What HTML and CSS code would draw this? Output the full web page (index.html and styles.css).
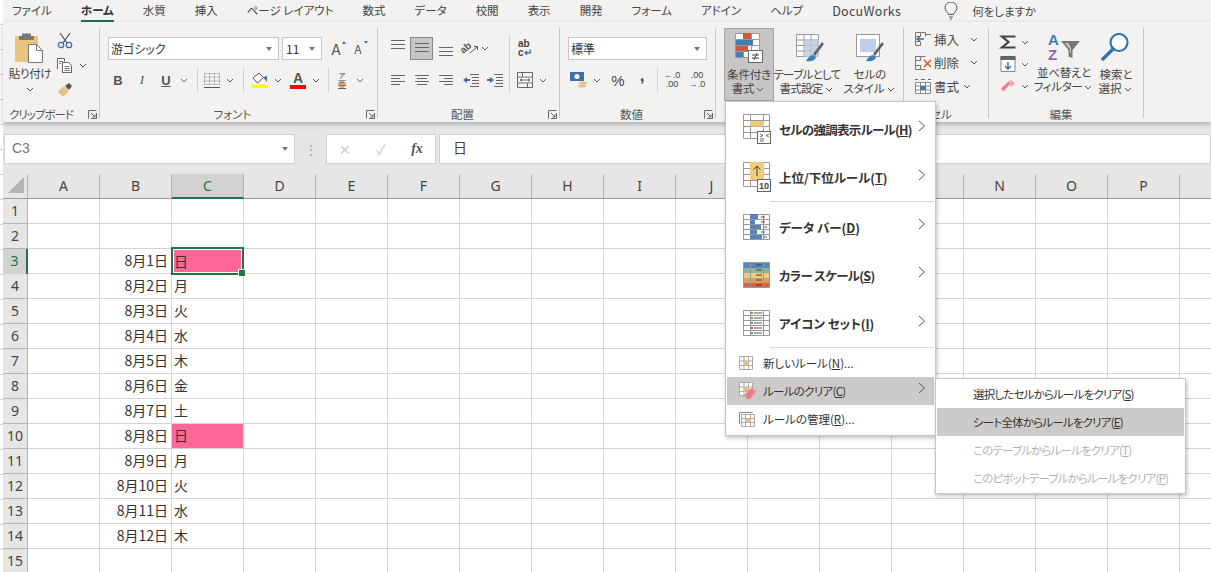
FILE: index.html

```html
<!DOCTYPE html>
<html lang="ja">
<head>
    <meta charset="UTF-8">
    <title>Excel - 条件付き書式</title>
    <link rel="stylesheet" href="styles.css">
</head>
<body>
    <svg class="defs" width="0" height="0">
        <symbol id="chev" viewBox="0 0 8 5"><path d="M1 1l3 3 3-3" fill="none" stroke="#555" stroke-width="1"/></symbol>
        <symbol id="launch" viewBox="0 0 9 9"><path d="M.5 8.500V.5h8M8.500 3v5.500H3M3 3l4 4M7 4.500V7H4.500" fill="none" stroke="#666"/></symbol>
        <symbol id="right" viewBox="0 0 8 12"><path d="M1 1l5.500 5L1 11" fill="none" stroke="#555" stroke-width="1"/></symbol>
        <symbol id="lines" viewBox="0 0 16 12"><path d="M1 1.500h14M1 5.500h14M1 9.500h14" stroke="#666"/></symbol>
    </svg>

    <!-- タブ -->
    <nav class="tabs">
        <span class="tab tab-file">ファイル</span>
        <span class="tab active">ホーム</span>
        <span class="tab">水質</span>
        <span class="tab">挿入</span>
        <span class="tab">ページ レイアウト</span>
        <span class="tab">数式</span>
        <span class="tab">データ</span>
        <span class="tab">校閲</span>
        <span class="tab">表示</span>
        <span class="tab">開発</span>
        <span class="tab">フォーム</span>
        <span class="tab">アドイン</span>
        <span class="tab">ヘルプ</span>
        <span class="tab tab-docu">DocuWorks</span>
        <span class="tell">
            <svg width="14" height="18" viewBox="0 0 14 18"><path d="M4.500 12.500C4 10 1 9 1 6a6 6 0 0 1 12 0c0 3-3 4-3.500 6.500zM5 15h4M6 17h2" fill="none" stroke="#555"/></svg>
            何をしますか
        </span>
    </nav>

    <!-- リボン -->
    <section class="ribbon">
        <div class="group group-clip">
            <div class="group-body">
                <div class="paste">
                    <svg width="30" height="31" viewBox="0 0 30 31">
                        <rect x="0" y="4" width="23" height="26" fill="#ebc47f"/>
                        <path d="M7 4V1.500h9V4h3v4H4V4z" fill="#777"/>
                        <path d="M13.500 12.500h8l6 6v12h-14z" fill="#fff" stroke="#777"/>
                        <path d="M21.500 12.500v6h6" fill="none" stroke="#777"/>
                    </svg>
                    <span class="paste-text">貼り付け</span>
                    <svg class="chev"><use href="#chev"/></svg>
                </div>
                <div class="clip-tools">
                    <svg width="16" height="17" viewBox="0 0 16 17">
                        <path d="M3 1l7 10M13 1L6 11" stroke="#555" stroke-width="1.300"/>
                        <circle cx="4" cy="13" r="2.700" fill="none" stroke="#3f6fa5" stroke-width="1.300"/>
                        <circle cx="12" cy="13" r="2.700" fill="none" stroke="#3f6fa5" stroke-width="1.300"/>
                    </svg>
                    <span class="copy-row">
                        <svg width="16" height="15" viewBox="0 0 16 15">
                            <path d="M.5 11V.5h7v3M5.500 4.500h6l3 3v7h-9z" fill="#fff" stroke="#666"/>
                            <path d="M7.500 8.500h5M7.500 10.500h5M7.500 12.500h5M2 3.500h4M2 5.500h2" stroke="#777"/>
                        </svg>
                        <svg class="chev"><use href="#chev"/></svg>
                    </span>
                    <svg class="brush" width="16" height="15" viewBox="0 0 16 15">
                        <path d="M1 9l6-5 5 5-5 5C5 14 2 12 1 9z" fill="#e5c184"/>
                        <path d="M8 4l4-3 3 3-3 4z" fill="#555"/>
                    </svg>
                </div>
            </div>
            <div class="group-foot"><span></span><span class="foot-clip">クリップボード</span><svg class="launch"><use href="#launch"/></svg></div>
        </div>

        <div class="group group-font">
            <div class="group-body column">
                <div class="tool-row row-top">
                    <div class="combo combo-font">游ゴシック<i class="caret"></i></div>
                    <div class="combo combo-size">11<i class="caret"></i></div>
                    <span class="grow">A<i class="grow-up"></i></span>
                    <span class="grow small">A<i class="grow-down"></i></span>
                </div>
                <div class="tool-row font-tools">
                    <span class="tool txt"><b>B</b></span>
                    <span class="tool txt italic">I</span>
                    <span class="tool txt under"><b>U</b></span>
                    <svg class="chev"><use href="#chev"/></svg>
                    <i class="sep m7"></i>
                    <span class="tool m2">
                        <svg width="16" height="15" viewBox="0 0 16 15"><path d="M.5.5h15v11H.5zM5.500.5v11M10.500.5v11M.5 4h15M.5 8h15" fill="none" stroke="#888" stroke-dasharray="1 1"/><path d="M0 14.500h16" stroke="#555"/></svg>
                    </span>
                    <svg class="chev"><use href="#chev"/></svg>
                    <i class="sep m7"></i>
                    <span class="tool m4">
                        <svg width="16" height="16" viewBox="0 0 16 16"><path d="M7 1L1 6l4.500 5 6-5.500z" fill="#fff" stroke="#555"/><path d="M11 5l4-1v6z" fill="#3f6fa5"/><rect y="12.500" width="16" height="3.500" fill="#ffff00"/></svg>
                    </span>
                    <svg class="chev"><use href="#chev"/></svg>
                    <span class="tool m2 font-color"><b>A</b><i></i></span>
                    <svg class="chev"><use href="#chev"/></svg>
                    <i class="sep m6"></i>
                    <span class="tool m1 ruby"><small>ア</small>亜</span>
                    <svg class="chev"><use href="#chev"/></svg>
                </div>
            </div>
            <div class="group-foot"><span></span><span>フォント</span><svg class="launch"><use href="#launch"/></svg></div>
        </div>

        <div class="group group-align">
            <div class="group-body">
                <div class="column">
                    <div class="tool-row row-top">
                        <span class="tool"><svg class="line-top" width="16" height="12"><use href="#lines" width="16" height="12"/></svg></span>
                        <span class="tool pressed"><svg width="16" height="12"><use href="#lines" width="16" height="12"/></svg></span>
                        <span class="tool"><svg class="line-bottom" width="16" height="12"><use href="#lines" width="16" height="12"/></svg></span>
                        <span class="tool">
                            <svg class="tilt-icon" width="18" height="16" viewBox="0 0 18 16"><text x="0" y="12" class="tilt" transform="rotate(-40 4 10)">ab</text><path d="M9 13l7-6M13 6.500h3.500V10" fill="none" stroke="#555"/></svg>
                        </span>
                        <svg class="chev pull"><use href="#chev"/></svg>
                    </div>
                    <div class="tool-row">
                        <span class="tool"><svg width="16" height="12" viewBox="0 0 16 12"><path d="M1 1.500h14M1 4.500h9M1 7.500h14M1 10.500h9" stroke="#666"/></svg></span>
                        <span class="tool"><svg width="16" height="12" viewBox="0 0 16 12"><path d="M1 1.500h14M3 4.500h10M1 7.500h14M3 10.500h10" stroke="#666"/></svg></span>
                        <span class="tool"><svg width="16" height="12" viewBox="0 0 16 12"><path d="M1 1.500h14M6 4.500h9M1 7.500h14M6 10.500h9" stroke="#666"/></svg></span>
                        <span class="tool"><svg width="17" height="14" viewBox="0 0 17 14"><path d="M1 7l4-3v2h3v2H5v2z" fill="#3f6fa5"/><path d="M8 1.500h9M10 4.500h7M10 7.500h7M10 10.500h7M8 13.500h9" stroke="#666"/></svg></span>
                        <span class="tool"><svg width="17" height="14" viewBox="0 0 17 14"><path d="M8 7L4 4v2H1v2h3v2z" fill="#3f6fa5"/><path d="M8 1.500h9M10 4.500h7M10 7.500h7M10 10.500h7M8 13.500h9" stroke="#666"/></svg></span>
                    </div>
                </div>
                <i class="sep sep-tall"></i>
                <div class="column">
                    <div class="tool-row row-top">
                        <span class="tool wrap-text">ab<br>c<em>↵</em></span>
                    </div>
                    <div class="tool-row">
                        <span class="tool"><svg width="16" height="16" viewBox="0 0 16 16"><path d="M.5.5h15v15H.5zM.5 5h15M.5 11h15M5.500.5V5M10.500 11v4.500" fill="#fff" stroke="#666"/><path d="M3 8h10M5 6.500L3 8l2 1.500M11 6.500L13 8l-2 1.500" fill="none" stroke="#3f6fa5"/></svg></span>
                        <svg class="chev"><use href="#chev"/></svg>
                    </div>
                </div>
            </div>
            <div class="group-foot"><span></span><span>配置</span><svg class="launch"><use href="#launch"/></svg></div>
        </div>

        <div class="group group-number">
            <div class="group-body column">
                <div class="tool-row row-top">
                    <div class="combo combo-format">標準<i class="caret"></i></div>
                </div>
                <div class="tool-row">
                    <span class="tool">
                        <svg width="18" height="16" viewBox="0 0 18 16"><rect width="14" height="9" fill="#3f6fa5"/><circle cx="7" cy="4.500" r="2.500" fill="#fff"/><ellipse cx="13" cy="11" rx="4" ry="1.500" fill="#e5c184"/><ellipse cx="12" cy="14" rx="4" ry="1.500" fill="#e5c184"/></svg>
                    </span>
                    <svg class="chev"><use href="#chev"/></svg>
                    <span class="tool m3 percent">%</span>
                    <span class="tool comma">,</span>
                    <i class="sep m3"></i>
                    <span class="tool m2 decimals"><span><em>←</em>.0</span><span>.00</span></span>
                    <span class="tool m1 decimals"><span>.00</span><span><em>→</em>.0</span></span>
                </div>
            </div>
            <div class="group-foot"><span></span><span>数値</span><svg class="launch"><use href="#launch"/></svg></div>
        </div>

        <div class="group group-style">
            <div class="group-body">
                <div class="big-btn cond open">
                    <svg width="28" height="30" viewBox="0 0 28 30">
                        <path d="M.5.5h24v24H.5zM8.500.5v24M16.500.5v24M.5 6.500h24M.5 12.500h24M.5 18.500h24" fill="#fff" stroke="#999"/>
                        <rect x="8" width="8" height="6" fill="#d0583a"/>
                        <rect x="1" y="7" width="17" height="5" fill="#3f7cb8"/>
                        <rect x="1" y="13" width="12" height="5" fill="#d0583a"/>
                        <rect x="1" y="19" width="7" height="5" fill="#3f7cb8"/>
                        <rect x="13.500" y="17.500" width="14" height="12" fill="#fff" stroke="#666"/>
                        <path d="M17 22h7M17 25h7M22 20l-3 7" stroke="#444" fill="none"/>
                    </svg>
                    <span>条件付き<br>書式<svg class="chev"><use href="#chev"/></svg></span>
                </div>
                <div class="big-btn table-btn">
                    <svg width="30" height="30" viewBox="0 0 30 30">
                        <path d="M1.500 1.500h22v22h-22zM1.500 7h22M1.500 12.500h22M1.500 18h22M9 1.500v22M16 1.500v22" fill="#fff" stroke="#999"/>
                        <rect x="9" y="7" width="15" height="17" fill="#b9c9dd" opacity=".8"/>
                        <path d="M18 21l9-12 2 2-9 12z" fill="#666"/>
                        <path d="M18 22c-3 0-5 3-7 6 4 1 9 0 10-4z" fill="#3f7cb8"/>
                    </svg>
                    <span>テーブルとして<br>書式設定<svg class="chev"><use href="#chev"/></svg></span>
                </div>
                <div class="big-btn cell-btn">
                    <svg width="30" height="30" viewBox="0 0 30 30">
                        <rect x="1.500" y="1.500" width="23" height="22" fill="#fff" stroke="#999"/>
                        <rect x="5" y="6" width="16" height="13" fill="#bdd0e6"/>
                        <path d="M18 21l9-12 2 2-9 12z" fill="#666"/>
                        <path d="M18 22c-3 0-5 3-7 6 4 1 9 0 10-4z" fill="#3f7cb8"/>
                    </svg>
                    <span>セルの<br>スタイル<svg class="chev"><use href="#chev"/></svg></span>
                </div>
            </div>
            <div class="group-foot"></div>
        </div>

        <div class="group group-cells">
            <div class="group-body column cell-list">
                <div class="cell-item">
                    <svg width="18" height="16" viewBox="0 0 18 16"><path d="M1.500 1.500h5v4h-5zM1.500 10.500h5v4h-5zM6.500 1.500h5v4M1.500 5.500v5M12 3.500h5" fill="none" stroke="#777"/><path d="M3 8h7M6 5.500L3 8l3 2.500" fill="none" stroke="#3f6fa5" stroke-width="1.300"/></svg>
                    <span>挿入</span><svg class="chev wide"><use href="#chev"/></svg>
                </div>
                <div class="cell-item">
                    <svg width="18" height="16" viewBox="0 0 18 16"><path d="M1.500 1.500h5v4h-5zM1.500 10.500h5v4h-5zM6.500 1.500h5M1.500 5.500v5M6.500 14.500h5" fill="none" stroke="#777"/><path d="M10 5l7 7M17 5l-7 7" stroke="#d0583a" stroke-width="1.500"/></svg>
                    <span>削除</span><svg class="chev wide"><use href="#chev"/></svg>
                </div>
                <div class="cell-item">
                    <svg width="18" height="16" viewBox="0 0 18 16"><path d="M1.500 4.500h15v11h-15zM1.500 8h15M1.500 12h15M6.500 4.500v11M11.500 4.500v11" fill="#fff" stroke="#888"/><rect x="6" y="8" width="6" height="4" fill="#3f7cb8"/><path d="M1 1.500h3M7 1.500h4M14 1.500h3" stroke="#3f6fa5"/></svg>
                    <span>書式</span><svg class="chev"><use href="#chev"/></svg>
                </div>
            </div>
            <div class="group-foot"><span></span><span>セル</span><span></span></div>
        </div>

        <div class="group group-edit">
            <div class="group-body">
                <div class="column edit-list">
                    <div class="edit-item">
                        <svg width="16" height="14" viewBox="0 0 16 14"><path d="M15.500 1.500H2L8.500 7 2 12.500h13.500" fill="none" stroke="#444" stroke-width="2.200"/></svg>
                        <svg class="chev"><use href="#chev"/></svg>
                    </div>
                    <div class="edit-item">
                        <svg width="15" height="16" viewBox="0 0 15 16"><path d="M.5.500h14v15H.5z" fill="#fff" stroke="#888"/><rect width="15" height="4" fill="#666"/><path d="M7.500 6v7M4.500 10l3 3 3-3" fill="none" stroke="#3f7cb8" stroke-width="1.600"/></svg>
                        <svg class="chev"><use href="#chev"/></svg>
                    </div>
                    <div class="edit-item">
                        <svg width="16" height="14" viewBox="0 0 16 14"><path d="M1 9.500L9 2l2 2-7 8H3z" fill="#e9808f"/><path d="M9 2l2-1 4 3-1 2-3 2-2-3z" fill="#f0a9b4"/></svg>
                        <svg class="chev"><use href="#chev"/></svg>
                    </div>
                </div>
                <div class="big-btn sort-btn">
                    <svg class="sort-icon" width="34" height="28" viewBox="0 0 34 28">
                        <text x="1" y="12" class="sort-a">A</text>
                        <text x="1" y="27" class="sort-z">Z</text>
                        <path d="M14 8h19l-7.500 9v8l-4-1.500V17z" fill="#777"/>
                        <path d="M18 10h3l3 5v5h-1v-4z" fill="#ccc"/>
                    </svg>
                    <span>並べ替えと<br>フィルター<svg class="chev"><use href="#chev"/></svg></span>
                </div>
                <div class="big-btn find-btn">
                    <svg width="30" height="30" viewBox="0 0 30 30">
                        <circle cx="18" cy="9.500" r="8.500" fill="#fff" stroke="#2f75b5" stroke-width="2.200"/>
                        <path d="M12 16L2 26" stroke="#2f75b5" stroke-width="3.500" stroke-linecap="round"/>
                    </svg>
                    <span>検索と<br>選択<svg class="chev"><use href="#chev"/></svg></span>
                </div>
            </div>
            <div class="group-foot"><span></span><span>編集</span><span></span></div>
        </div>
    </section>

    <!-- 数式バー -->
    <section class="formula-bar">
        <div class="name-box">C3<i class="caret"></i></div>
        <span class="grip">⋮</span>
        <div class="fx-box">
            <span class="fx-btn off">✕</span>
            <span class="fx-btn off">✓</span>
            <span class="fx-btn fx">fx</span>
        </div>
        <div class="formula-input">日</div>
    </section>

    <!-- シート -->
    <section class="sheet">
        <div class="col-heads">
            <div class="corner"><i></i></div>
            <div class="col-head">A</div>
            <div class="col-head">B</div>
            <div class="col-head current">C</div>
            <div class="col-head">D</div>
            <div class="col-head">E</div>
            <div class="col-head">F</div>
            <div class="col-head">G</div>
            <div class="col-head">H</div>
            <div class="col-head">I</div>
            <div class="col-head">J</div>
            <div class="col-head">K</div>
            <div class="col-head">L</div>
            <div class="col-head">M</div>
            <div class="col-head">N</div>
            <div class="col-head">O</div>
            <div class="col-head">P</div>
            <div class="col-head"></div>
        </div>
        <div class="rows">
            <div class="row"><div class="row-head">1</div></div>
            <div class="row"><div class="row-head">2</div></div>
            <div class="row"><div class="row-head current">3</div><div></div><div class="date">8月1日</div><div class="day pink selected">日</div></div>
            <div class="row"><div class="row-head">4</div><div></div><div class="date">8月2日</div><div class="day">月</div></div>
            <div class="row"><div class="row-head">5</div><div></div><div class="date">8月3日</div><div class="day">火</div></div>
            <div class="row"><div class="row-head">6</div><div></div><div class="date">8月4日</div><div class="day">水</div></div>
            <div class="row"><div class="row-head">7</div><div></div><div class="date">8月5日</div><div class="day">木</div></div>
            <div class="row"><div class="row-head">8</div><div></div><div class="date">8月6日</div><div class="day">金</div></div>
            <div class="row"><div class="row-head">9</div><div></div><div class="date">8月7日</div><div class="day">土</div></div>
            <div class="row"><div class="row-head">10</div><div></div><div class="date">8月8日</div><div class="day pink">日</div></div>
            <div class="row"><div class="row-head">11</div><div></div><div class="date">8月9日</div><div class="day">月</div></div>
            <div class="row"><div class="row-head">12</div><div></div><div class="date">8月10日</div><div class="day">火</div></div>
            <div class="row"><div class="row-head">13</div><div></div><div class="date">8月11日</div><div class="day">水</div></div>
            <div class="row"><div class="row-head">14</div><div></div><div class="date">8月12日</div><div class="day">木</div></div>
            <div class="row"><div class="row-head">15</div></div>
        </div>
    </section>

    <!-- 条件付き書式メニュー -->
    <div class="menu main-menu">
        <div class="item big">
            <svg class="big-icon" width="28" height="30" viewBox="0 0 28 30">
                <path d="M.5.5h26v24H.5zM.5 6.500h26M.5 12.500h26M.5 18.500h26M7.500.5v24M20.500.5v24" fill="#fff" stroke="#999"/>
                <rect x="7" y="7" width="14" height="5.500" fill="#eecb7f"/>
                <rect x="14.500" y="17.500" width="13" height="12" fill="#fff" stroke="#666"/>
                <path d="M17 20l3 1.500-3 1.500M17 25h4M17 27h4M26 20l-3 1.500 3 1.500" fill="none" stroke="#444" stroke-width=".8"/>
            </svg>
            <span class="label tight">セルの強調表示ルール(<u>H</u>)</span>
            <svg class="arrow"><use href="#right"/></svg>
        </div>
        <div class="item big ruled">
            <svg class="big-icon" width="28" height="30" viewBox="0 0 28 30">
                <path d="M.5.5h26v24H.5zM.5 6.500h26M.5 12.500h26M.5 18.500h26M7.500.5v24M20.500.5v24" fill="#fff" stroke="#999"/>
                <rect x="7" y="0" width="14" height="18" fill="#eecb7f"/>
                <path d="M14 14V4M10.500 7.500L14 4l3.500 3.500" fill="none" stroke="#444"/>
                <rect x="14.500" y="17.500" width="13" height="12" fill="#fff" stroke="#666"/>
                <text x="16" y="27" class="ten">10</text>
            </svg>
            <span class="label">上位/下位ルール(<u>T</u>)</span>
            <svg class="arrow"><use href="#right"/></svg>
        </div>
        <div class="item big">
            <svg class="big-icon" width="28" height="26" viewBox="0 0 28 26">
                <path d="M.5.5h26v25H.5zM.5 5.500h26M.5 10.500h26M.5 15.500h26M.5 20.500h26M7.500.5v25M20.500.5v25" fill="#fff" stroke="#999"/>
                <rect x="7" width="8" height="5" fill="#5484bb"/><rect x="7" y="6" width="5" height="4" fill="#5484bb"/><rect x="7" y="11" width="11" height="4" fill="#5484bb"/><rect x="7" y="16" width="7" height="4" fill="#5484bb"/><rect x="7" y="21" width="12" height="4" fill="#5484bb"/>
                <path d="M18 3h4M18 8h4M21 13h3M18 18h4M21 23h3" stroke="#555"/>
            </svg>
            <span class="label">データ バー(<u>D</u>)</span>
            <svg class="arrow"><use href="#right"/></svg>
        </div>
        <div class="item big">
            <svg class="big-icon" width="28" height="26" viewBox="0 0 28 26">
                <rect x="1" y="1" width="26" height="5" fill="#5484bb"/><rect x="1" y="6" width="26" height="5" fill="#8cb39c"/><rect x="1" y="11" width="26" height="5" fill="#eecb7f"/><rect x="1" y="16" width="26" height="5" fill="#e19c62"/><rect x="1" y="21" width="26" height="4" fill="#d9613f"/>
                <path d="M.5.5h26v25H.5zM7.500.5v25M20.500.5v25" fill="none" stroke="#999"/>
                <path d="M13 3h6M13 8h6M13 13h6M13 18h6M13 23h6" stroke="#444"/>
            </svg>
            <span class="label tight">カラー スケール(<u>S</u>)</span>
            <svg class="arrow"><use href="#right"/></svg>
        </div>
        <div class="item big ruled">
            <svg class="big-icon" width="28" height="26" viewBox="0 0 28 26">
                <path d="M.5.5h26v25H.5zM.5 5.500h26M.5 10.500h26M.5 15.500h26M.5 20.500h26M7.500.5v25M20.500.5v25" fill="#fff" stroke="#999"/>
                <path d="M11 3h8M11 8h8M11 13h8M11 18h8M11 23h8" stroke="#555"/>
                <rect x="8" y="2" width="2" height="2" fill="#5f9e6e"/><rect x="8" y="7" width="2" height="2" fill="#d0883a"/><rect x="8" y="12" width="2" height="2" fill="#5f9e6e"/><rect x="8" y="17" width="2" height="2" fill="#d0583a"/><rect x="8" y="22" width="2" height="2" fill="#5f9e6e"/>
            </svg>
            <span class="label">アイコン セット(<u>I</u>)</span>
            <svg class="arrow"><use href="#right"/></svg>
        </div>
        <div class="item small-item">
            <svg class="small-icon" width="14" height="14" viewBox="0 0 14 14"><path d="M.5.5h13v13H.5zM.5 5h13M.5 9.500h13M5 .5v13M9.500.5v13" fill="#fff" stroke="#aaa"/><rect x="5" y="5" width="4.500" height="4.500" fill="#e5c184"/></svg>
            <span class="label">新しいルール(<u>N</u>)...</span>
        </div>
        <div class="item small-item hover">
            <svg class="small-icon" width="18" height="18" viewBox="0 0 18 18"><path d="M.5.5h13v13H.5zM.5 5h13M.5 9.500h13M5 .5v13M9.500.5v13" fill="#fff" stroke="#aaa"/><rect x="5" y="5" width="4.500" height="4.500" fill="#e5c184"/><path d="M5 13l7-7 5 3.500-6 7.500H8z" fill="#e9808f"/></svg>
            <span class="label tight">ルールのクリア(<u>C</u>)</span>
            <svg class="arrow"><use href="#right"/></svg>
        </div>
        <div class="item small-item">
            <svg class="small-icon" width="16" height="15" viewBox="0 0 16 15"><path d="M.5 12V.5h13" fill="none" stroke="#888"/><path d="M2.500 2.500h13v12h-13zM2.500 6.500h13M2.500 10.500h13M6.500 2.500v12M11.500 2.500v12" fill="#fff" stroke="#aaa"/><rect x="6.500" y="6.500" width="5" height="4" fill="#e5c184"/></svg>
            <span class="label">ルールの管理(<u>R</u>)...</span>
        </div>
    </div>

    <!-- サブメニュー -->
    <div class="menu sub-menu">
        <div class="item sub">選択したセルからルールをクリア(<u>S</u>)</div>
        <div class="item sub hover">シート全体からルールをクリア(<u>E</u>)</div>
        <div class="item sub disabled">このテーブルからルールをクリア(<u>T</u>)</div>
        <div class="item sub disabled">このピボットテーブルからルールをクリア(<u>P</u>)</div>
    </div>
</body>
</html>
```

FILE: styles.css

```css
* {
    box-sizing: border-box;
}

html, body {
    height: 100%;
}

body {
    margin: 0;
    padding-left: 3px;
    height: 572px;
    overflow: hidden;
    position: relative;
    background: repeating-linear-gradient(to bottom, #fff 0, #fff 24px, #d4d4d4 24px, #d4d4d4 25px);
    font-family: "Noto Sans CJK JP", "Noto Sans", sans-serif;
    font-feature-settings: "palt";
    font-size: 11.500px;
    color: #444;
}

i {
    font-style: normal;
}

.defs {
    position: absolute;
}

/* タブ */
.tabs {
    display: flex;
    align-items: center;
    height: 22px;
    padding-left: 9px;
    background: #f3f2f1;
    font-size: 11.500px;
}

.tab {
    margin-right: 29px;
    line-height: 21px;
    height: 22px;
    white-space: nowrap;
}

.tab.active {
    font-weight: bold;
    color: #333;
    border-bottom: 2px solid #217346;
}

.tab-docu {
    font-size: 12.500px;
    letter-spacing: .3px;
}

.tell {
    display: flex;
    align-items: center;
    gap: 14px;
    margin-left: 14px;
    height: 22px;
}

/* リボン */
.ribbon {
    display: flex;
    height: 100px;
    padding-top: 6px;
    background: #f3f2f1;
    box-shadow: 0 2px 5px rgba(0, 0, 0, 0.25);
    position: relative;
}

.group {
    display: flex;
    flex-direction: column;
    height: 90px;
    border-right: 1px solid #c8c6c4;
}

.group-body {
    display: flex;
    flex: none;
    height: 78px;
}

.column {
    display: flex;
    flex-direction: column;
}

.group-foot {
    display: grid;
    grid-template-columns: 1fr auto 1fr;
    align-items: center;
    flex: none;
    height: 14px;
    padding-right: 20px;
    font-size: 11.500px;
    color: #555;
}

.foot-clip {
    letter-spacing: -1px;
}

.launch {
    width: 9px;
    height: 9px;
    justify-self: end;
    margin-right: -18px;
}

.group-clip { width: 97px; }
.group-font { width: 278px; padding-left: 8px; }
.group-align { width: 182px; padding-left: 8px; }
.group-number { width: 156px; padding-left: 8px; }
.group-style { width: 188px; padding-left: 8px; }
.group-cells { width: 85px; padding-left: 10px; }
.group-edit { width: 155px; padding-left: 10px; }

.tool-row {
    display: flex;
    align-items: center;
    height: 24px;
}

.row-top {
    margin-top: 8px;
    margin-bottom: 8px;
}

.font-tools {
    margin-left: -2px;
}

.group-number .tool-row:last-child {
    margin-left: -1px;
}

.tool {
    display: flex;
    align-items: center;
    justify-content: center;
    width: 24px;
    height: 24px;
    flex: none;
}

.chev {
    width: 12px;
    height: 5px;
    flex: none;
}

.pull {
    margin-left: -3px;
}

.sep {
    display: block;
    width: 1px;
    height: 24px;
    flex: none;
    background: #d2d0ce;
}

.sep-tall {
    height: 58px;
    margin: 7px 3px 0 3px;
}

.m1 { margin-left: 1px; }
.m2 { margin-left: 2px; }
.m3 { margin-left: 3px; }
.m4 { margin-left: 4px; }
.m6 { margin-left: 6px; }
.m7 { margin-left: 7px; }

/* クリップボード */
.paste {
    display: flex;
    flex-direction: column;
    align-items: center;
    width: 54px;
    padding-top: 4px;
}

.paste-text {
    margin-top: 2px;
    white-space: nowrap;
    line-height: 16px;
    letter-spacing: -.3px;
}

.paste .chev {
    margin-top: 6px;
}

.clip-tools {
    display: flex;
    flex-direction: column;
    align-items: flex-start;
    padding: 4px 0 0 0;
    gap: 9px;
}

.copy-row {
    display: flex;
    align-items: center;
    gap: 4px;
}

/* フォント */
.combo {
    position: relative;
    height: 23px;
    line-height: 21px;
    padding-left: 2px;
    background: #fff;
    border: 1px solid #c8c6c4;
    font-size: 12px;
    color: #333;
}

.combo-font { width: 171px; }
.combo-size { width: 40px; margin-left: 3px; padding-left: 3px; }
.combo-format { width: 139px; }

.caret {
    position: absolute;
    right: 6px;
    top: 9px;
    border: 3px solid transparent;
    border-top: 4px solid #777;
    border-bottom: 0;
}

.grow {
    position: relative;
    width: 22px;
    margin-left: 3px;
    text-align: center;
    font-size: 15px;
    line-height: 23px;
    color: #555;
}

.grow.small {
    font-size: 12px;
    margin-left: 0;
}

.grow-up, .grow-down {
    position: absolute;
    right: 1px;
    top: 4px;
    border: 2.500px solid transparent;
    border-top: 0;
    border-bottom: 3px solid #3f6fa5;
}

.grow-down {
    border-bottom: 0;
    border-top: 3px solid #3f6fa5;
}

.txt {
    font-family: "Liberation Serif", serif;
    font-size: 13px;
    color: #555;
}

.txt b {
    font-family: "Liberation Sans", sans-serif;
}

.italic {
    font-style: italic;
}

.under b {
    text-decoration: underline;
}

.font-color {
    flex-direction: column;
    font-family: "Liberation Sans", sans-serif;
    font-size: 14px;
    line-height: 13px;
    color: #555;
}

.font-color i {
    display: block;
    width: 16px;
    height: 4px;
    background: #f00;
}

.ruby {
    flex-direction: column;
    font-size: 9px;
    line-height: 10px;
}

.ruby small {
    display: block;
    height: 9px;
    line-height: 9px;
    font-size: 7px;
}

/* 配置 */
.tool.pressed {
    width: 23px;
    height: 23px;
    background: #c8c6c4;
    border: 1px solid #8a8886;
    margin-right: 1px;
}

.line-top { transform: translateY(-3px); }
.line-bottom { transform: translateY(4px); }

.tilt-icon {
    overflow: visible;
}

.tilt {
    font-family: "Liberation Sans", sans-serif;
    font-size: 10px;
    font-weight: bold;
    fill: #555;
}

.wrap-text {
    display: block;
    padding-left: 5px;
    font-family: "Liberation Sans", sans-serif;
    font-size: 10px;
    font-weight: bold;
    line-height: 9px;
    padding-top: 3px;
}

.wrap-text em {
    font-style: normal;
    color: #3f6fa5;
}

/* 数値 */
.percent {
    font-family: "Liberation Sans", sans-serif;
    font-size: 15px;
}

.comma {
    font-family: "Liberation Sans", sans-serif;
    font-size: 17px;
    font-weight: bold;
    padding-bottom: 8px;
}

.decimals {
    flex-direction: column;
    font-family: "Liberation Sans", sans-serif;
    font-size: 9px;
    line-height: 9px;
}

.decimals em {
    font-style: normal;
    color: #3f6fa5;
}

/* スタイル */
.big-btn {
    display: flex;
    flex-direction: column;
    align-items: center;
    text-align: center;
    line-height: 14px;
    white-space: nowrap;
    font-size: 11.500px;
    color: #444;
}

.big-btn svg:first-child {
    flex: none;
    margin-top: 5px;
    margin-bottom: 4px;
}

.big-btn .chev {
    width: 12px;
    vertical-align: 1px;
}

.cond {
    width: 50px;
    height: 73px;
    background: #c8c6c4;
    border: 1px solid #a5a3a1;
    letter-spacing: -.2px;
}

.cond svg:first-child {
    margin-top: 4px;
}

.table-btn {
    width: 66px;
    letter-spacing: -.7px;
}

.table-btn svg:first-child {
    margin-left: 6px;
}

.cell-btn {
    width: 60px;
}

/* セル */
.cell-list {
    gap: 3px;
    padding-top: 1px;
}

.cell-item {
    display: flex;
    align-items: center;
    gap: 2px;
    flex: none;
    height: 20.500px;
    font-size: 12.500px;
}

.cell-item .wide {
    margin-left: 7px;
}

/* 編集 */
.edit-list {
    width: 40px;
    padding-top: 3px;
}

.edit-item {
    display: flex;
    align-items: center;
    gap: 2px;
    height: 22px;
}

.edit-item svg:first-child {
    width: 18px;
}

.sort-icon {
    overflow: visible;
}

.sort-a, .sort-z {
    font-family: "Liberation Sans", sans-serif;
    font-size: 15px;
    font-weight: bold;
}

.sort-a { fill: #3f7cb8; }
.sort-z { fill: #9a5fb4; }

.sort-btn {
    width: 50px;
    letter-spacing: -.3px;
}

.find-btn {
    width: 38px;
    margin-left: 8px;
}

/* 数式バー */
.formula-bar {
    display: flex;
    align-items: center;
    height: 52px;
    padding: 11px 0 9px 1px;
    background: #e6e6e6;
}

.name-box {
    position: relative;
    width: 291px;
    height: 30px;
    line-height: 27px;
    padding-left: 7px;
    background: #fff;
    border: 1px solid #d2d0ce;
    font-family: "Liberation Sans", sans-serif;
    font-size: 14px;
    color: #777;
}

.name-box .caret {
    top: 12px;
}

.grip {
    width: 31px;
    text-align: center;
    color: #999;
}

.fx-box {
    display: flex;
    align-items: center;
    width: 110px;
    height: 30px;
    background: #fff;
    border: 1px solid #d2d0ce;
    margin-right: 3px;
}

.fx-btn {
    width: 36px;
    text-align: center;
    font-size: 14px;
}

.fx-btn.off {
    color: #c8c8c8;
}

.fx {
    font-family: "Liberation Serif", serif;
    font-style: italic;
    font-weight: bold;
    color: #555;
}

.formula-input {
    flex: 1;
    height: 30px;
    line-height: 25px;
    padding-left: 13px;
    background: #fff;
    border: 1px solid #d2d0ce;
    font-size: 14px;
    color: #444;
}

/* シート */
.sheet {
    background: #fff;
}

.col-heads {
    display: flex;
    height: 25px;
    background: #e6e6e6;
    border-bottom: 1px solid #9b9b9b;
}

.corner {
    display: flex;
    align-items: flex-end;
    justify-content: flex-end;
    width: 25px;
    flex: none;
    padding: 0 3px 5px 0;
    border-right: 1px solid #b4b4b4;
}

.corner i {
    border-left: 16px solid transparent;
    border-bottom: 16px solid #b4b4b4;
}

.col-head {
    width: 72px;
    flex: none;
    text-align: center;
    line-height: 23px;
    border-right: 1px solid #b4b4b4;
    font-family: "Noto Sans", sans-serif;
    font-size: 14px;
    color: #444;
}

.col-head.current {
    height: 25px;
    background: #d2d2d2;
    border-bottom: 2px solid #217346;
    color: #217346;
}

.rows {
    height: 375px;
    background-color: #fff;
    background-image:
        repeating-linear-gradient(to right, transparent 0, transparent 71px, #d4d4d4 71px, #d4d4d4 72px),
        repeating-linear-gradient(to bottom, transparent 0, transparent 24px, #d4d4d4 24px, #d4d4d4 25px);
    background-position: 25px 0, 0 0;
}

.row {
    display: grid;
    grid-template-columns: 25px repeat(3, 72px);
    height: 25px;
    font-size: 14px;
    color: #333;
}

.row-head {
    background: #e6e6e6;
    text-align: center;
    line-height: 23px;
    border-right: 1px solid #b4b4b4;
    border-bottom: 1px solid #b4b4b4;
    font-family: "Noto Sans", sans-serif;
    color: #444;
}

.row-head.current {
    background: #d2d2d2;
    border-right: 2px solid #217346;
    color: #217346;
}

.date {
    text-align: right;
    padding-right: 4px;
    line-height: 23px;
}

.day {
    padding-left: 2px;
    line-height: 23px;
    margin-right: 1px;
    margin-bottom: 1px;
}

.pink {
    background: #ff6699;
}

.selected {
    position: relative;
    margin: -2px 0 0 -1px;
    padding-left: 1px;
    width: 73px;
    height: 28px;
    line-height: 24px;
    border: 2px solid #217346;
    box-shadow: inset 0 0 0 1px #fff;
}

.selected::after {
    content: "";
    position: absolute;
    right: -4px;
    bottom: -4px;
    width: 6px;
    height: 6px;
    background: #217346;
    border: 1px solid #fff;
}

/* メニュー */
.menu {
    position: absolute;
    background: #fff;
    border: 1px solid #c8c6c4;
    box-shadow: 1px 2px 4px rgba(0, 0, 0, 0.25);
    color: #333;
}

.main-menu {
    left: 725px;
    top: 101px;
    width: 211px;
    height: 335px;
    padding: 3px 1px;
}

.sub-menu {
    left: 935px;
    top: 378px;
    width: 251px;
    height: 116px;
    padding: 1px;
}

.item {
    display: flex;
    align-items: center;
    position: relative;
    white-space: nowrap;
}

.item.big {
    height: 48px;
    font-size: 12.500px;
    font-weight: bold;
}

.item.big .tight {
    letter-spacing: -.7px;
}

.item.ruled {
    height: 50px;
    padding-bottom: 2px;
}

.item.ruled::after {
    content: "";
    position: absolute;
    left: 43px;
    right: 0;
    bottom: 1px;
    border-bottom: 1px solid #d8d6d4;
}

.big-icon {
    margin-left: 16px;
    flex: none;
}

.big .label {
    margin-left: 8px;
}

.ten {
    font-family: "Liberation Sans", sans-serif;
    font-size: 9px;
    fill: #444;
}

.arrow {
    position: absolute;
    right: 8px;
    top: 50%;
    width: 8px;
    height: 12px;
    margin-top: -9px;
}

.small-item {
    height: 28px;
    font-size: 11.500px;
}

.small-icon {
    margin-left: 12px;
    flex: none;
}

.small-item .label {
    position: absolute;
    left: 36px;
}

.small-item .tight {
    letter-spacing: -.7px;
}

.hover {
    background: #cdcbc9;
}

.item.sub {
    height: 28px;
    padding-left: 36px;
    font-size: 11.500px;
    letter-spacing: -.8px;
}

.disabled {
    color: #b1b1b1;
}
```
